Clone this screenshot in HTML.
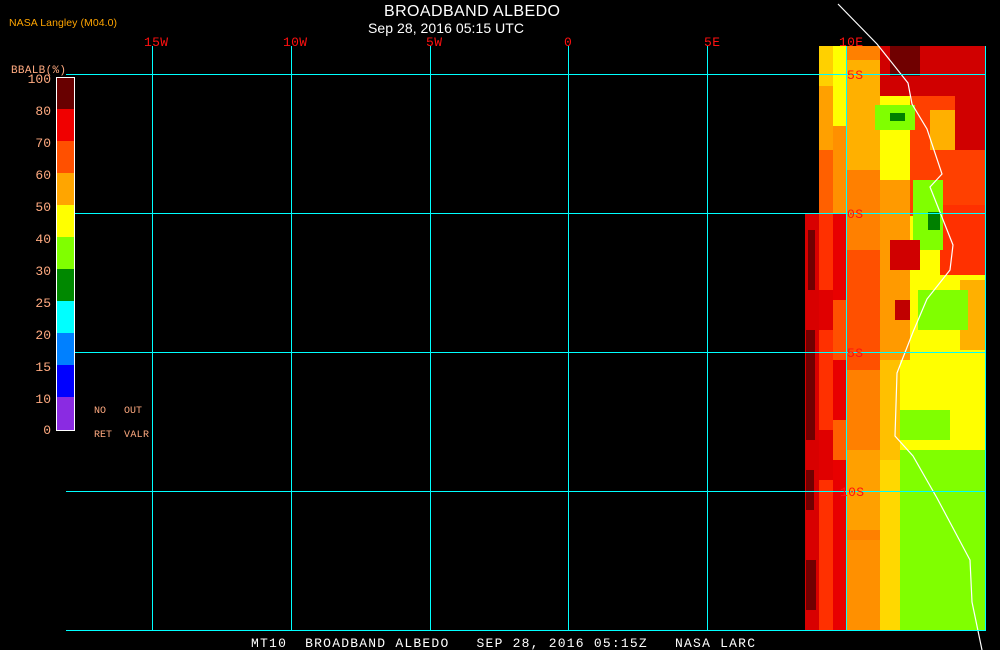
<!DOCTYPE html>
<html><head><meta charset="utf-8"><style>
html,body{margin:0;padding:0;background:#000;width:1000px;height:650px;overflow:hidden}
svg{display:block}
text{font-family:"Liberation Sans",sans-serif}
.m{font-family:"Liberation Mono",monospace}
</style></head><body>
<svg width="1000" height="650" viewBox="0 0 1000 650" xmlns="http://www.w3.org/2000/svg">
<rect width="1000" height="650" fill="#000"/>
<g shape-rendering="crispEdges">
<rect x="805" y="213" width="14" height="417" fill="#d80000"/>
<rect x="808" y="230" width="7" height="60" fill="#700000"/>
<rect x="806" y="330" width="9" height="110" fill="#700000"/>
<rect x="806" y="470" width="8" height="40" fill="#700000"/>
<rect x="806" y="560" width="10" height="50" fill="#700000"/>
<rect x="819" y="46" width="14" height="40" fill="#ffd000"/>
<rect x="819" y="86" width="14" height="127" fill="#ffa000"/>
<rect x="819" y="150" width="14" height="63" fill="#ff6000"/>
<rect x="819" y="213" width="14" height="417" fill="#ff3000"/>
<rect x="819" y="290" width="14" height="40" fill="#e00000"/>
<rect x="819" y="430" width="14" height="50" fill="#e00000"/>
<rect x="833" y="46" width="13" height="80" fill="#ffff00"/>
<rect x="833" y="126" width="13" height="87" fill="#ff9000"/>
<rect x="833" y="213" width="13" height="417" fill="#e80000"/>
<rect x="833" y="300" width="13" height="60" fill="#ff5000"/>
<rect x="833" y="420" width="13" height="40" fill="#ff6000"/>
<rect x="846" y="46" width="34" height="584" fill="#ff8000"/>
<rect x="846" y="60" width="34" height="110" fill="#ffb000"/>
<rect x="846" y="250" width="34" height="120" fill="#ff5000"/>
<rect x="846" y="450" width="34" height="80" fill="#ffa000"/>
<rect x="846" y="540" width="34" height="90" fill="#ff9000"/>
<rect x="880" y="46" width="105" height="584" fill="#ffff00"/>
<rect x="880" y="180" width="30" height="180" fill="#ff9a00"/>
<rect x="880" y="360" width="20" height="100" fill="#ffc000"/>
<rect x="880" y="460" width="20" height="170" fill="#ffd800"/>
<rect x="900" y="410" width="85" height="220" fill="#80ff00"/>
<rect x="900" y="440" width="60" height="10" fill="#ffff00"/>
<rect x="950" y="410" width="35" height="40" fill="#ffff00"/>
<rect x="880" y="46" width="105" height="50" fill="#d00000"/>
<rect x="890" y="46" width="30" height="30" fill="#700000"/>
<rect x="910" y="96" width="75" height="120" fill="#ff4000"/>
<rect x="930" y="110" width="25" height="40" fill="#ffb000"/>
<rect x="955" y="90" width="30" height="60" fill="#d00000"/>
<rect x="940" y="205" width="45" height="70" fill="#ff3000"/>
<rect x="960" y="280" width="25" height="70" fill="#ffb000"/>
<rect x="875" y="105" width="40" height="25" fill="#80ff00"/>
<rect x="890" y="113" width="15" height="8" fill="#008000"/>
<rect x="913" y="180" width="30" height="70" fill="#80ff00"/>
<rect x="928" y="212" width="12" height="18" fill="#008000"/>
<rect x="918" y="290" width="50" height="40" fill="#80ff00"/>
<rect x="890" y="240" width="30" height="30" fill="#d00000"/>
<rect x="895" y="300" width="15" height="20" fill="#c00000"/>
</g>
<polyline points="838,4 877,44 908,83 912,104 927,129 942,174 930,187 953,245 950,270 927,299 913,332 897,373 895,436 913,456 937,498 970,560 972,602 982,650" fill="none" stroke="#fff" stroke-width="1.2"/>
<g stroke="#00ffff" stroke-width="1">
<line x1="66" y1="74.5" x2="986" y2="74.5"/>
<line x1="66" y1="213.5" x2="986" y2="213.5"/>
<line x1="66" y1="352.5" x2="986" y2="352.5"/>
<line x1="66" y1="491.5" x2="986" y2="491.5"/>
<line x1="66" y1="630.5" x2="986" y2="630.5"/>
<line x1="152.5" y1="46" x2="152.5" y2="630"/>
<line x1="291.5" y1="46" x2="291.5" y2="630"/>
<line x1="430.5" y1="46" x2="430.5" y2="630"/>
<line x1="568.5" y1="46" x2="568.5" y2="630"/>
<line x1="707.5" y1="46" x2="707.5" y2="630"/>
<line x1="846.5" y1="46" x2="846.5" y2="630"/>
<line x1="985.5" y1="46" x2="985.5" y2="630"/>
</g>
<g fill="#ff1010" font-size="13">
<text x="144" y="46" class="m" textLength="24">15W</text>
<text x="283" y="46" class="m" textLength="24">10W</text>
<text x="426" y="46" class="m" textLength="16">5W</text>
<text x="564" y="46" class="m">0</text>
<text x="704" y="46" class="m" textLength="16">5E</text>
<text x="839" y="46" class="m" textLength="24">10E</text>
<text x="847" y="79" class="m" textLength="16">5S</text>
<text x="847" y="218" class="m" textLength="16">0S</text>
<text x="847" y="357" class="m" textLength="16">5S</text>
<text x="840" y="496" class="m" textLength="24">10S</text>
</g>
<text x="384" y="16" fill="#fff" font-size="16" textLength="176">BROADBAND ALBEDO</text>
<text x="368" y="33" fill="#fff" font-size="14" textLength="156">Sep 28, 2016 05:15 UTC</text>
<text x="9" y="26" fill="#ffa500" font-size="10.5" textLength="108">NASA Langley (M04.0)</text>
<text x="11" y="73" fill="#ffaa80" font-size="11" class="m" textLength="55">BBALB(%)</text>
<g shape-rendering="crispEdges">
<rect x="56" y="77" width="18" height="32" fill="#680000"/>
<rect x="56" y="109" width="18" height="32" fill="#f00000"/>
<rect x="56" y="141" width="18" height="32" fill="#ff5000"/>
<rect x="56" y="173" width="18" height="32" fill="#ffa500"/>
<rect x="56" y="205" width="18" height="32" fill="#ffff00"/>
<rect x="56" y="237" width="18" height="32" fill="#80ff00"/>
<rect x="56" y="269" width="18" height="32" fill="#008800"/>
<rect x="56" y="301" width="18" height="32" fill="#00ffff"/>
<rect x="56" y="333" width="18" height="32" fill="#0080ff"/>
<rect x="56" y="365" width="18" height="32" fill="#0000ff"/>
<rect x="56" y="397" width="18" height="33" fill="#8a2be2"/>
<rect x="56.5" y="77.5" width="18" height="353" fill="none" stroke="#fff" stroke-width="1"/>
</g>
<g fill="#ffaa80" font-size="13" text-anchor="end">
<text x="51" y="83" class="m">100</text>
<text x="51" y="115" class="m">80</text>
<text x="51" y="147" class="m">70</text>
<text x="51" y="179" class="m">60</text>
<text x="51" y="211" class="m">50</text>
<text x="51" y="243" class="m">40</text>
<text x="51" y="275" class="m">30</text>
<text x="51" y="307" class="m">25</text>
<text x="51" y="339" class="m">20</text>
<text x="51" y="371" class="m">15</text>
<text x="51" y="403" class="m">10</text>
<text x="51" y="434" class="m">0</text>
</g>
<g fill="#ffaa80" font-size="10">
<text x="94" y="413" class="m">NO</text>
<text x="124" y="413" class="m">OUT</text>
<text x="94" y="437" class="m">RET</text>
<text x="124" y="437" class="m" textLength="25">VALR</text>
</g>
<text x="251" y="647" fill="#fff" font-size="13" class="m" textLength="504" xml:space="preserve">MT10  BROADBAND ALBEDO   SEP 28, 2016 05:15Z   NASA LARC</text>
</svg>
</body></html>
